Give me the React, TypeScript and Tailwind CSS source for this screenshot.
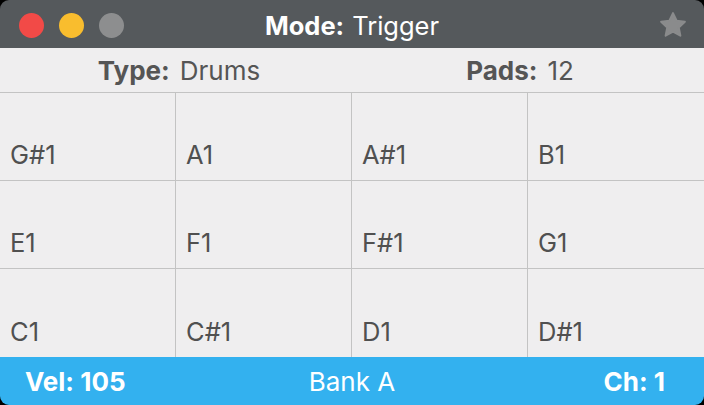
const pads = [
  ["G#1", "A1", "A#1", "B1"],
  ["E1", "F1", "F#1", "G1"],
  ["C1", "C#1", "D1", "D#1"],
];

function Star() {
  return (
    <svg width="30" height="30" viewBox="0 0 24 24">
      <path
        d="M12 2.5l2.9 6.1 6.6.8-4.9 4.6 1.3 6.6L12 17.3l-5.9 3.3 1.3-6.6-4.9-4.6 6.6-.8z"
        fill="#8a8b8c"
        stroke="#8a8b8c"
        strokeWidth="1.6"
        strokeLinejoin="round"
      />
    </svg>
  );
}

export default function App() {
  return (
    <div
      className="h-[405px] w-[704px] bg-black"
      style={{ fontFamily: "Inter, 'Liberation Sans', sans-serif" }}
    >
      <div className="flex h-full w-full flex-col overflow-hidden rounded-[9px]">
        {/* title bar */}
        <div className="relative flex h-[48px] shrink-0 items-center bg-[#55595c] px-[19px] pt-[2px]">
          <div className="flex gap-[15px]">
            <span className="h-[25px] w-[25px] rounded-full bg-[#f24a47]" />
            <span className="h-[25px] w-[25px] rounded-full bg-[#f9bd2e]" />
            <span className="h-[25px] w-[25px] rounded-full bg-[#8d8e8f]" />
          </div>
          <div className="absolute inset-0 flex items-center justify-center pt-[4px] text-[25.5px] text-white">
            <span className="font-bold">Mode:</span>
            <span className="ml-[8px]">Trigger</span>
          </div>
          <div className="ml-auto mr-[-3px]">
            <Star />
          </div>
        </div>

        {/* info bar */}
        <div className="grid h-[45px] shrink-0 grid-cols-2 border-b border-[#c3c3c3] bg-[#efeeef] text-[26px] text-[#555555]">
          <div className="flex items-center justify-center pl-[6px]">
            <span className="font-bold">Type:</span>
            <span className="ml-[10px]">Drums</span>
          </div>
          <div className="flex items-center justify-center pr-[16px]">
            <span className="font-bold">Pads:</span>
            <span className="ml-[10px]">12</span>
          </div>
        </div>

        {/* pads */}
        <div className="grid flex-1 grid-cols-4 grid-rows-3 bg-[#efeeef]">
          {pads.flat().map((note, i) => (
            <div
              key={note}
              className={`flex items-end px-[10px] pb-[6px] text-[25.5px] text-[#505050] ${
                i % 4 !== 3 ? "border-r border-[#c3c3c3]" : ""
              } ${i < 8 ? "border-b border-[#c3c3c3]" : ""}`}
            >
              {note}
            </div>
          ))}
        </div>

        {/* footer */}
        <div className="grid h-[48px] shrink-0 grid-cols-3 items-center bg-[#33b1ef] px-[25px] text-[26px] text-white">
          <span className="font-bold">Vel: 105</span>
          <span className="text-center">Bank A</span>
          <span className="pr-[14px] text-right font-bold">Ch: 1</span>
        </div>
      </div>
    </div>
  );
}
